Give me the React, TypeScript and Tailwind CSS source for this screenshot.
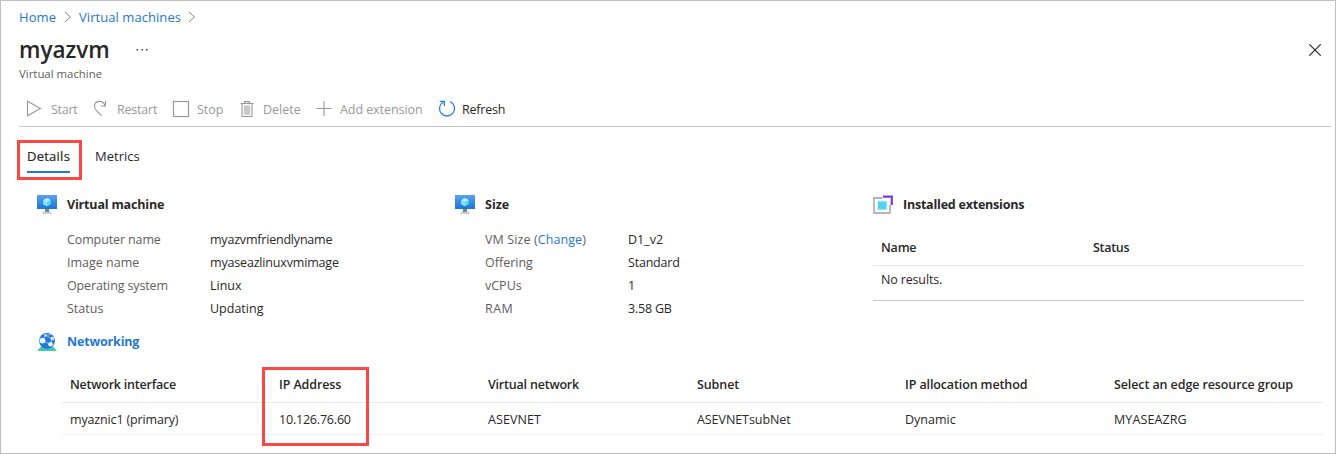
import React from "react";

function Chevron() {
  return (
    <svg width="8" height="12" viewBox="0 0 8 12" fill="none" stroke="#8a8886" strokeWidth="1">
      <path d="M1 1 6.500 6 1 11" />
    </svg>
  );
}

function MonitorIcon() {
  return (
    <svg width="20" height="20" viewBox="0 0 20 20">
      <defs>
        <linearGradient id="screen" x1="0" y1="0" x2="0" y2="14" gradientUnits="userSpaceOnUse">
          <stop offset="0" stopColor="#5ea0ef" />
          <stop offset="1" stopColor="#1b76d3" />
        </linearGradient>
      </defs>
      <rect width="20" height="14" fill="url(#screen)" />
      <path d="M10 3 13.700 5v4.200L10 11.300 6.300 9.200V5z" fill="#50d8f5" />
      <path d="M10 3 13.700 5 10 7.100 6.300 5z" fill="#b5effa" />
      <path d="M6.300 5 10 7.100v4.200L6.300 9.200z" fill="#8be4f8" />
      <path d="M8 14h4v3H8z" fill="#7d7d7d" />
      <path d="M6.500 16.800h7l1.800 2H4.700z" fill="#c4c4c4" />
    </svg>
  );
}

function ExtensionIcon() {
  return (
    <svg width="20" height="20" viewBox="0 0 20 20" fill="none">
      <path d="M9.500 3H1v15h16v-8" stroke="#b3b3b3" strokeWidth="1.800" />
      <path d="M10 1.700h8.800V10" stroke="#773adc" strokeWidth="2.200" />
      <rect x="4.500" y="6" width="9.500" height="9" fill="#50d3f2" stroke="#d5f4fb" />
    </svg>
  );
}

function NetworkIcon() {
  return (
    <svg width="20" height="20" viewBox="0 0 20 20">
      <path d="M4 14.500h12l4 4.500H0z" fill="#45c7ab" />
      <circle cx="10" cy="8.800" r="7.900" fill="#1f78d6" />
      <path d="M5.500 8.500 8.500 3.500 15 6.500 13.500 12.500M8.500 3.500 14 2.500M5.500 8.500 13 12.500" stroke="#9cc6f3" strokeWidth="0.900" fill="none" />
      <circle cx="5.500" cy="8.600" r="2.900" fill="#f2f7fd" />
      <circle cx="13.500" cy="12.300" r="2.300" fill="#e9f2fc" />
      <circle cx="15.300" cy="6.600" r="1.800" fill="#d7e8fa" />
      <circle cx="8.400" cy="3.300" r="1.300" fill="#c5def8" />
    </svg>
  );
}

function ToolIcon({ name }: { name: string }) {
  return (
    <svg width="18" height="18" viewBox="0 0 18 18" fill="none" stroke="#999" strokeWidth="1.100">
      {name === "Start" && <path d="M2.500 1.300 15.500 8.500 2.500 15.700z" />}
      {name === "Restart" && (
        <path d="M13.500 1v5H8.800M13.200 5.700C12 2.800 9.800 1.300 7.300 1.400 4.300 1.600 2.500 3.800 2.500 6.500c0 2.200 1.300 3.700 2.800 5l4.200 4.200" />
      )}
      {name === "Stop" && <rect x="1.500" y="1.500" width="15" height="15" strokeWidth="1.200" />}
      {name === "Delete" && (
        <>
          <path d="M2.500 3.500h13M6.500 3.500V1.600h5v1.900M4 3.500v13h10v-13" />
          <path d="M5.800 5.500h6.400v9.200H5.800z" fill="#c8c8c8" stroke="none" />
        </>
      )}
      {name === "Add extension" && <path d="M1.500 8.500h15M9 1v15" />}
      {name === "Refresh" && (
        <path stroke="#2b80d9" strokeWidth="1.300" d="M12.200 1.700A7.500 7.500 0 1 1 5.300 2M1.700 1.300h4.700V6" />
      )}
    </svg>
  );
}

const tools = [
  { name: "Start", icon: "w-[26px]", box: "w-[67px]", text: "tracking-[-0.25px]" },
  { name: "Restart", icon: "w-[25px]", box: "w-[80px]", text: "tracking-[-0.2px]" },
  { name: "Stop", icon: "w-[25px]", box: "w-[66px]", text: "" },
  { name: "Delete", icon: "w-[25px]", box: "w-[77px]", text: "" },
  { name: "Add extension", icon: "w-[25px]", box: "w-[123px]", text: "tracking-[-0.07px]" },
  { name: "Refresh", icon: "w-[24px]", box: "w-[70px]", text: "tracking-[-0.2px] text-[#292827]" },
];

function Heading({ icon, children, className }: { icon: React.ReactNode; children: string; className: string }) {
  return (
    <div className="flex h-5 items-center">
      <span className="w-[30px]">{icon}</span>
      <h2 className={`font-bold ${className}`}>{children}</h2>
    </div>
  );
}

function Row({ label, children }: { label: React.ReactNode; children: React.ReactNode }) {
  return (
    <div className="flex h-[23px] items-center pl-[30px]">
      <dt className="w-[143px] text-[#605e5c]">{label}</dt>
      <dd className="text-[#292827]">{children}</dd>
    </div>
  );
}

const columns = [
  { title: "Network interface", value: "myaznic1 (primary)", head: "tracking-[-0.22px]", cell: "tracking-[-0.15px]" },
  { title: "IP Address", value: "10.126.76.60", head: "tracking-[-0.1px]", cell: "tracking-[-0.2px]" },
  { title: "Virtual network", value: "ASEVNET", head: "tracking-[-0.2px]", cell: "tracking-[0.1px]" },
  { title: "Subnet", value: "ASEVNETsubNet", head: "tracking-[-0.1px]", cell: "tracking-[-0.07px]" },
  { title: "IP allocation method", value: "Dynamic", head: "tracking-[-0.12px]", cell: "" },
  { title: "Select an edge resource group", value: "MYASEAZRG", head: "tracking-[-0.1px]", cell: "tracking-[0.1px]" },
];

export default function App() {
  return (
    <div className="relative h-[454px] w-[1336px] overflow-hidden border border-[#bfbfbf] bg-white font-['Open_Sans',sans-serif] text-[12.5px] leading-5 whitespace-nowrap text-[#292827]">
      <nav className="mt-1.5 flex h-5 items-center pl-[18px] text-[13px] text-[#2378d0]">
        <a className="w-[45px] tracking-[0.1px]">Home</a>
        <Chevron />
        <a className="ml-[7px] w-[109px] tracking-[0.06px]">Virtual machines</a>
        <Chevron />
      </nav>

      <header className="mt-[7px] flex h-[30px] items-center pl-[18px]">
        <h1 className="w-[116px] pt-0.5 text-[22.5px] font-semibold">myazvm</h1>
        <svg width="14" height="4" viewBox="0 0 14 4" fill="#444">
          <path d="M1.500 2H3v1.500H1.500zM6.500 2H8v1.500H6.500zM11 2h1.500v1.500H11z" />
        </svg>
        <svg className="mt-0.5 mr-3.5 ml-auto" width="12" height="12" viewBox="0 0 12 12" stroke="#222" strokeWidth="1.100">
          <path d="M.3.3 11.700 11.700M11.700.3.3 11.700" />
        </svg>
      </header>
      <p className="h-5 pl-[18px] text-[11.400px] text-[#605e5c]">Virtual machine</p>

      <div className="mr-1 ml-[18px] flex border-b border-[#c8c8c8] pt-[15px] pb-[7px] pl-[6px]">
        {tools.map((t) => (
          <button key={t.name} className={`flex h-5 items-center text-left text-[#999] ${t.box}`}>
            <span className={`shrink-0 ${t.icon}`}>
              <ToolIcon name={t.name} />
            </span>
            <span className={`pt-0.5 ${t.text}`}>{t.name}</span>
          </button>
        ))}
      </div>

      <div className="mt-[19px] flex pl-[26px] text-[13px]">
        <span className="relative w-[43px] border-b-2 border-[#1f78d1] pb-[5px] [-webkit-text-stroke:0.2px] tracking-[0.25px]">
          Details
          <i className="absolute -top-1.5 -left-2.5 h-10 w-[65px] border-3 border-[#fc4747]" />
        </span>
        <span className="ml-[25px]">Metrics</span>
      </div>

      <main className="mt-[22px] flex pl-[36px]">
        <section className="w-[418px]">
          <Heading className="tracking-[-0.17px]" icon={<MonitorIcon />}>Virtual machine</Heading>
          <dl className="mt-[13px]">
            <Row label={<span className="tracking-[-0.12px]">Computer name</span>}>
              <span className="tracking-[-0.2px]">myazvmfriendlyname</span>
            </Row>
            <Row label="Image name"><span className="tracking-[-0.17px]">myaseazlinuxvmimage</span></Row>
            <Row label={<span className="tracking-[-0.13px]">Operating system</span>}>Linux</Row>
            <Row label="Status">Updating</Row>
          </dl>
        </section>
        <section className="w-[418px]">
          <Heading className="" icon={<MonitorIcon />}>Size</Heading>
          <dl className="mt-[13px]">
            <Row label={<span className="tracking-[0.1px]">VM Size (<a className="text-[#1f78d1]">Change</a>)</span>}>D1_v2</Row>
            <Row label="Offering"><span className="tracking-[-0.2px]">Standard</span></Row>
            <Row label="vCPUs">1</Row>
            <Row label={<span className="tracking-[0.5px]">RAM</span>}><span className="tracking-[-0.2px]">3.58 GB</span></Row>
          </dl>
        </section>
        <section className="w-[431px]">
          <Heading className="tracking-[-0.22px]" icon={<ExtensionIcon />}>Installed extensions</Heading>
          <div className="mt-[14px] flex h-[37px] items-center border-b border-[#e8e8e8] pt-0.5 pl-2 font-semibold">
            <span className="w-[212px] tracking-[-0.2px]">Name</span>
            <span className="tracking-[-0.3px]">Status</span>
          </div>
          <div className="flex h-[35px] items-center border-b border-[#c8c8c8] pb-[7px] pl-2 tracking-[-0.15px]">No results.</div>
        </section>
      </main>

      <section className="mt-[12px] pl-[36px]">
        <Heading className="tracking-[-0.17px] text-[#1f78d1]" icon={<NetworkIcon />}>Networking</Heading>
        <div className="relative mt-[15px] ml-[25px] w-[1261px]">
          <div className="grid h-9 grid-cols-[209px_209px_209px_208px_209px_1fr] items-center border-b border-[#e8e8e8] pl-2 font-semibold">
            {columns.map((c) => <span key={c.title} className={c.head}>{c.title}</span>)}
          </div>
          <div className="grid h-8 grid-cols-[209px_209px_209px_208px_209px_1fr] items-center border-b border-[#f0f0f0] pt-[3px] pl-2">
            {columns.map((c) => <span key={c.title} className={c.cell}>{c.value}</span>)}
          </div>
          <i className="absolute top-0 left-[200px] h-[79px] w-[107px] border-3 border-[#fc4747]" />
        </div>
      </section>
    </div>
  );
}
